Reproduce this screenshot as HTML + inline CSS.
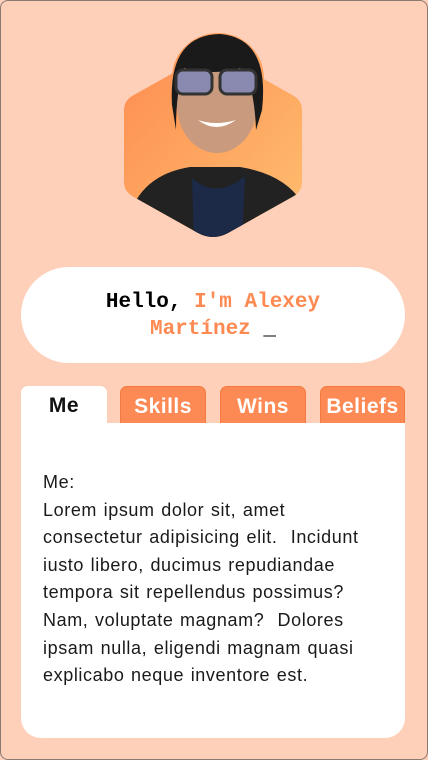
<!DOCTYPE html>
<html><head><style>
html,body{margin:0;padding:0}
body{width:428px;height:760px;background:#ffd0b9;position:relative;overflow:hidden;font-family:"Liberation Sans",sans-serif;}
.frame{position:absolute;left:0;top:0;width:426px;height:758px;border:1px solid #8a7a70;border-radius:8px;}
.pill{position:absolute;left:21px;top:267px;width:384px;height:96px;background:#fff;border-radius:48px;text-align:center;font-family:"Liberation Mono",monospace;font-weight:bold;font-size:21px;line-height:27px;box-sizing:border-box;padding-top:22px}
.o{color:#fd8a52}
.tab{position:absolute;top:386px;height:37px;width:86px;box-sizing:border-box;border-radius:7px 7px 0 0;background:#fd8a55;border:1px solid #f07a40;border-bottom:none;color:#fff;font-weight:bold;font-size:21px;text-align:center;line-height:40px;letter-spacing:0.5px}
.panel{position:absolute;left:21px;top:423px;width:384px;height:315px;background:#fff;border-radius:0 0 20px 20px;box-sizing:border-box;padding:46px 10px 0 22px;font-size:18px;line-height:27.6px;color:#1a1a1a;white-space:nowrap;letter-spacing:0.6px;word-spacing:1px}
</style></head><body>
<div class="frame"></div>
<svg style="position:absolute;left:120px;top:30px" width="186" height="212" viewBox="0 0 186 212">
<defs>
<linearGradient id="g" x1="0" y1="0" x2="1" y2="1"><stop offset="0" stop-color="#fd8a4f"/><stop offset="1" stop-color="#ffc070"/></linearGradient>
<clipPath id="c"><path d="M93 25 Q100 25 108 29 L174 66 Q182 71 182 80 L182 152 Q182 161 174 166 L108 203 Q93 211 78 203 L12 166 Q4 161 4 152 L4 80 Q4 71 12 66 L78 29 Q86 25 93 25 Z"/><ellipse cx="98" cy="48" rx="46" ry="45"/></clipPath>
</defs>
<g clip-path="url(#c)">
<rect width="186" height="212" fill="url(#g)"/>
<path d="M8 190 Q20 145 70 137 L120 137 Q170 145 186 180 L186 212 L8 212Z" fill="#222"/>
<path d="M72 148 Q97 170 125 146 L122 212 L74 212Z" fill="#1c2a48"/>
<ellipse cx="97" cy="75" rx="40" ry="48" fill="#c99a7d"/>
<path d="M52 75 Q48 5 100 4 Q150 8 142 80 L136 100 Q134 50 120 38 Q95 46 64 38 Q56 60 56 100Z" fill="#1a1a1a"/>
<rect x="56" y="40" width="36" height="24" rx="7" fill="#8a8ab0" stroke="#333" stroke-width="3"/>
<rect x="100" y="40" width="36" height="24" rx="7" fill="#8a8ab0" stroke="#333" stroke-width="3"/>
<path d="M78 90 Q96 104 116 90 Q96 96 78 90Z" fill="#fff"/>
</g>
</svg>
<div class="pill">Hello, <span class="o">I'm Alexey<br>Martínez</span> _</div>
<div class="tab" style="left:21px;background:#fff;border:none;color:#111">Me</div>
<div class="tab" style="left:120px">Skills</div>
<div class="tab" style="left:220px">Wins</div>
<div class="tab" style="left:320px;width:85px">Beliefs</div>
<div class="panel">Me:<br>Lorem ipsum dolor sit, amet<br>consectetur adipisicing elit.&nbsp; Incidunt<br>iusto libero, ducimus repudiandae<br>tempora sit repellendus possimus?<br>Nam, voluptate magnam?&nbsp; Dolores<br>ipsam nulla, eligendi magnam quasi<br>explicabo neque inventore est.</div>
</body></html>
